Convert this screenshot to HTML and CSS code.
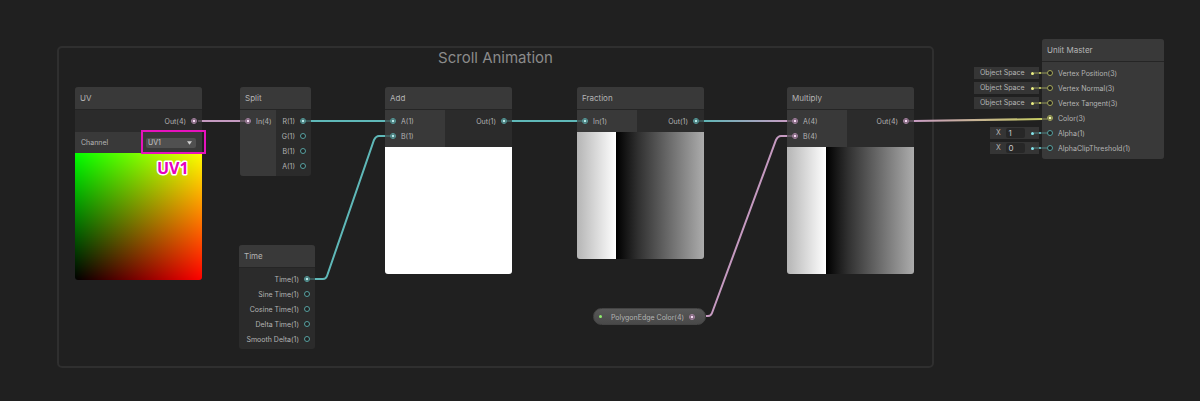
FILE: index.html
```html
<!DOCTYPE html>
<html lang="en">
<head>
<meta charset="utf-8">
<title>Shader Graph</title>
<link rel="stylesheet" href="styles.css">
</head>
<body>
<main class="canvas">
  <section class="group"><h1 class="group-title">Scroll Animation</h1></section>

  <article class="node node-uv">
    <h2 class="node-title">UV</h2>
    <div class="ports"><ul class="outputs wide"><li>Out(4)<i class="port pink on"></i></li></ul></div>
    <div class="control">
      <label for="channel">Channel</label>
      <div class="select-wrap">
        <select id="channel"><option>UV1</option><option>UV0</option></select>
        <svg class="caret" viewBox="0 0 6 4"><path d="M0 0H6L3 4Z"/></svg>
      </div>
    </div>
    <div class="preview preview-uv"></div>
  </article>

  <article class="node node-split">
    <h2 class="node-title">Split</h2>
    <div class="ports">
      <ul class="inputs"><li><i class="port pink on"></i>In(4)</li></ul>
      <ul class="outputs">
        <li>R(1)<i class="port teal on"></i></li>
        <li>G(1)<i class="port teal"></i></li>
        <li>B(1)<i class="port teal"></i></li>
        <li>A(1)<i class="port teal"></i></li>
      </ul>
    </div>
  </article>

  <article class="node node-time">
    <h2 class="node-title">Time</h2>
    <div class="ports">
      <ul class="outputs wide">
        <li>Time(1)<i class="port teal on"></i></li>
        <li>Sine Time(1)<i class="port teal"></i></li>
        <li>Cosine Time(1)<i class="port teal"></i></li>
        <li>Delta Time(1)<i class="port teal"></i></li>
        <li>Smooth Delta(1)<i class="port teal"></i></li>
      </ul>
    </div>
  </article>

  <article class="node node-add">
    <h2 class="node-title">Add</h2>
    <div class="ports">
      <ul class="inputs"><li><i class="port teal on"></i>A(1)</li><li><i class="port teal on"></i>B(1)</li></ul>
      <ul class="outputs"><li>Out(1)<i class="port teal on"></i></li></ul>
    </div>
    <div class="preview preview-white"></div>
  </article>

  <article class="node node-fraction">
    <h2 class="node-title">Fraction</h2>
    <div class="ports">
      <ul class="inputs"><li><i class="port teal on"></i>In(1)</li></ul>
      <ul class="outputs"><li>Out(1)<i class="port teal on"></i></li></ul>
    </div>
    <div class="preview preview-ramp"></div>
  </article>

  <article class="node node-multiply">
    <h2 class="node-title">Multiply</h2>
    <div class="ports">
      <ul class="inputs"><li><i class="port pink on"></i>A(4)</li><li><i class="port pink on"></i>B(4)</li></ul>
      <ul class="outputs"><li>Out(4)<i class="port pink on"></i></li></ul>
    </div>
    <div class="preview preview-ramp"></div>
  </article>

  <div class="property"><i class="dot green"></i><span>PolygonEdge Color(4)</span><i class="port pink on"></i></div>

  <div class="defaults">
    <div class="default">Object Space<i class="dot yellow"></i></div>
    <div class="default">Object Space<i class="dot yellow"></i></div>
    <div class="default">Object Space<i class="dot yellow"></i></div>
    <div class="default number alpha"><label for="alpha">X</label><input id="alpha" type="text" value="1"><i class="dot teal"></i></div>
    <div class="default number"><label for="clip">X</label><input id="clip" type="text" value="0"><i class="dot teal"></i></div>
  </div>

  <article class="node node-master">
    <h2 class="node-title">Unlit Master</h2>
    <div class="ports">
      <ul class="inputs wide">
        <li><i class="port yellow"></i>Vertex Position(3)</li>
        <li><i class="port yellow"></i>Vertex Normal(3)</li>
        <li><i class="port yellow"></i>Vertex Tangent(3)</li>
        <li><i class="port yellow on"></i>Color(3)</li>
        <li><i class="port teal"></i>Alpha(1)</li>
        <li><i class="port teal"></i>AlphaClipThreshold(1)</li>
      </ul>
    </div>
  </article>

  <svg class="edges" width="1200" height="401" aria-hidden="true">
    <defs>
      <linearGradient id="teal-pink" gradientUnits="userSpaceOnUse" x1="704" y1="0" x2="788" y2="0"><stop offset="0" stop-color="#5fb5b5"/><stop offset="1" stop-color="#c89cc3"/></linearGradient>
      <linearGradient id="pink-yellow" gradientUnits="userSpaceOnUse" x1="914" y1="0" x2="1042" y2="0"><stop offset="0" stop-color="#c89cc3"/><stop offset="1" stop-color="#c6cc62"/></linearGradient>
    </defs>
    <g class="wire">
      <path class="s-pink" d="M202 121H240"/>
      <path class="s-teal" d="M311 121H385"/>
      <path class="s-teal" d="M315 279H323Q326 279 327 276L374 140Q376 136 379 136H385"/>
      <path class="s-teal" d="M512 121H577"/>
      <path d="M704 121H787" stroke="url(#teal-pink)"/>
      <path class="s-pink" d="M706 316H708Q711 316 712 313L776 140Q778 136 781 136H787"/>
      <path d="M914 121L1042 119" stroke="url(#pink-yellow)"/>
    </g>
    <g class="stub">
      <path class="s-pink" d="M198 121H202M240 121H245M787 121H792M787 136H792M909 121H914"/>
      <path class="s-teal" d="M306 121H311M385 121H390M385 136H390M507 121H512M577 121H582M699 121H704M310 279H315"/>
      <path class="s-yellow" d="M1042 119H1047M1034 73H1047M1034 88H1047M1034 103H1047"/>
      <path class="s-teal" d="M1034 133H1047M1034 148H1047"/>
    </g>
    <g class="f-yellow"><circle cx="1040" cy="73" r="1"/><circle cx="1040" cy="88" r="1"/><circle cx="1040" cy="103" r="1"/></g>
    <g class="f-teal"><circle cx="1040" cy="133" r="1"/><circle cx="1040" cy="148" r="1"/></g>
  </svg>

  <div class="highlight"></div>
  <svg class="callout" width="40" height="24"><text x="5" y="17">UV1</text></svg>
</main>
</body>
</html>
```
FILE: styles.css
```css
* { box-sizing: border-box; }
body { margin: 0; background: #202020; color: #b4b4b4; font: 7px/15px Inter, "Liberation Sans", sans-serif; }
.canvas { position: relative; min-height: 100vh; overflow: hidden; }
h1, h2, ul { margin: 0; padding: 0; font-weight: 400; list-style: none; }

.group { position: absolute; left: 57px; top: 46px; width: 877px; height: 322px; border: 2px solid #2f2f2f; border-radius: 5px; }
.group-title { font-size: 15px; line-height: 20px; text-align: center; color: #8b8b8b; }

.node { position: absolute; width: 127px; border-radius: 3px; overflow: hidden; background: #2b2b2b; }
.node-uv { left: 75px; top: 87px; }
.node-split { left: 240px; top: 87px; width: 71px; }
.node-time { left: 239px; top: 245px; width: 76px; }
.node-add { left: 385px; top: 87px; }
.node-fraction { left: 577px; top: 87px; }
.node-multiply { left: 787px; top: 87px; }
.node-master { left: 1042px; top: 39px; width: 122px; }

.node-title { padding: 1px 5px 0; font-size: 8px; line-height: 21px; background: #393939; border-bottom: 1px solid #252525; }
.ports { display: flex; }
.inputs { width: 60px; padding: 3px 5px 4px; background: #393939; }
.outputs { flex: 1; padding: 3px 5px 4px; }
.node-split .inputs { width: 36px; }
.node-split ul, .node-time ul { padding-bottom: 3px; }
.ports .wide { width: 100%; }
.ports li { display: flex; align-items: flex-start; gap: 5px; height: 15px; line-height: 18px; white-space: nowrap; }
.outputs li { justify-content: flex-end; }

.port { flex: none; width: 6px; height: 6px; border: 1px solid currentColor; border-radius: 50%; background: #202020; }
.ports .port { margin-top: 5px; }
.port.teal { color: #56a0a0; }
.port.pink { color: #a985a5; }
.port.yellow { color: #a5a85a; }
.port.on { background: radial-gradient(circle, #eaffff 0, #a0dede 1px, #203c3c 2px); }
.port.pink.on { background: radial-gradient(circle, #fff 0, #f0caec 1px, #3c2c3a 2px); }
.port.yellow.on { background: radial-gradient(circle, #fff 0, #eef39a 1px, #3c3d20 2px); }

.control { display: flex; align-items: center; justify-content: space-between; height: 21px; padding: 0 6px; background: #393939; }
.select-wrap { position: relative; width: 50px; height: 10px; }
select { display: block; width: 100%; height: 10px; padding: 0 2px; border: 0; border-radius: 2px; appearance: none; background: #505050; color: #c8c8c8; font: 7px/10px Inter, sans-serif; }
.caret { position: absolute; right: 4px; top: 3px; width: 5px; height: 4px; fill: #d0d0d0; }

.preview { height: 127px; }
.preview-uv { background: linear-gradient(to right, #000, #f00), linear-gradient(to top, #000, #0f0); background-blend-mode: screen; }
.preview-white { background: #fff; }
.preview-ramp { background: linear-gradient(to right, #b5b5b5 0, #fff 31%, #000 31%, #303030 48%, #acacac 100%); }

.property { position: absolute; left: 593px; top: 308px; width: 113px; height: 17px; display: flex; align-items: center; gap: 5px; padding: 0 10px 0 5px; border: 1px solid #444; border-radius: 9px; background: linear-gradient(#585858, #494949); line-height: 17px; white-space: nowrap; }
.property span { flex: 1; padding-top: 1px; text-align: right; }

.dot { flex: none; width: 3px; height: 3px; border-radius: 50%; background: currentColor; }
.dot.green { color: #8fef6c; }
.dot.yellow { color: #eef184; }
.dot.teal { color: #84e4ec; }
.defaults { position: absolute; left: 974px; top: 67px; width: 65px; display: flex; flex-direction: column; align-items: flex-end; gap: 3px; }
.default { display: flex; align-items: center; justify-content: space-between; width: 65px; height: 12px; padding: 0 5px 0 6px; background: #353535; line-height: 12px; white-space: nowrap; }
.number { width: 49px; }
.alpha { margin-top: 15px; }
.default input { width: 19px; height: 10px; padding: 0 2px; border: 0; border-radius: 2px; background: #272727; color: #c8c8c8; font: 8px/10px Inter, sans-serif; }

.edges { position: absolute; left: 0; top: 0; pointer-events: none; }
.wire { fill: none; stroke-width: 2; }
.stub { fill: none; stroke-width: 1; opacity: .6; }
.s-teal { stroke: #5fb8b8; }
.s-pink { stroke: #c59ac0; }
.s-yellow { stroke: #d3d96c; }
.f-yellow { fill: #d3d96c; }
.f-teal { fill: #74cfd6; }

.highlight { position: absolute; left: 141px; top: 130px; width: 65px; height: 24px; border: 2px solid #e612bd; pointer-events: none; }
.callout { position: absolute; left: 152px; top: 157px; font: 700 16px "Open Sans", "Noto Sans", sans-serif; fill: #e600be; stroke: #fff; stroke-width: 3px; stroke-linejoin: round; paint-order: stroke; }
```
